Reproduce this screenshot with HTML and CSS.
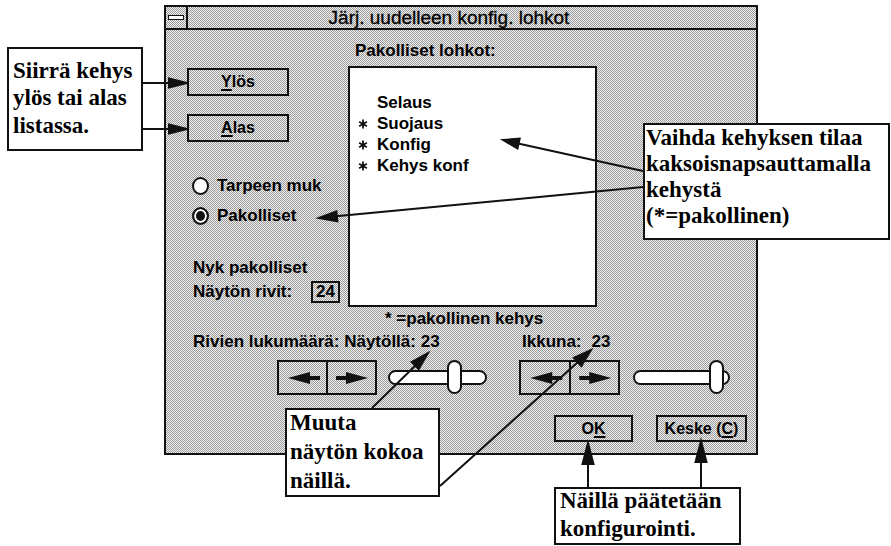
FILE: index.html
```html
<!DOCTYPE html>
<html lang="fi">
<head>
    <meta charset="UTF-8">
    <title>Järj. uudelleen konfig. lohkot</title>
    <link rel="stylesheet" href="styles.css">
</head>
<body>
<div id="figure">
    <div class="window">
        <div class="titlebar">
            <div class="sysmenu"><span class="sysbar"></span></div>
            <div class="title">Järj. uudelleen konfig. lohkot</div>
        </div>
        <div class="top">
            <div class="leftcol">
                <div class="btn btn-move"><u>Y</u>lös</div>
                <div class="btn btn-move btn-down"><u>A</u>las</div>
                <div class="radios">
                    <div class="radio"><span class="dot"></span>Tarpeen muk</div>
                    <div class="radio"><span class="dot on"></span>Pakolliset</div>
                </div>
                <div class="current">
                    <div>Nyk pakolliset</div>
                    <div class="rows"><span class="rows-label">Näytön rivit:</span><span class="rows-value">24</span></div>
                </div>
            </div>
            <div class="rightcol">
                <div class="heading">Pakolliset lohkot:</div>
                <div class="list">
                    <div class="item"><span class="mark"></span>Selaus</div>
                    <div class="item"><span class="mark"><svg class="star" viewBox="0 0 10 10"><path d="M5 0.5V9.5M1.1 2.75L8.9 7.25M1.1 7.25L8.9 2.75"/></svg></span>Suojaus</div>
                    <div class="item"><span class="mark"><svg class="star" viewBox="0 0 10 10"><path d="M5 0.5V9.5M1.1 2.75L8.9 7.25M1.1 7.25L8.9 2.75"/></svg></span>Konfig</div>
                    <div class="item"><span class="mark"><svg class="star" viewBox="0 0 10 10"><path d="M5 0.5V9.5M1.1 2.75L8.9 7.25M1.1 7.25L8.9 2.75"/></svg></span>Kehys konf</div>
                </div>
                <div class="note">* =pakollinen kehys</div>
            </div>
        </div>
        <div class="counts">
            <div class="count-screen">Rivien lukumäärä: Näytöllä: 23</div>
            <div>Ikkuna:<span class="count-val">23</span></div>
        </div>
        <div class="controls">
            <div class="spin">
                <div class="spin-half"><svg viewBox="0 0 47 31"><polygon points="9,16 31,10 31,22"/><rect x="30" y="14" width="11" height="4"/></svg></div>
                <div class="spin-half"><svg viewBox="0 0 47 31"><rect x="8" y="14" width="11" height="4"/><polygon points="40,16 18,10 18,22"/></svg></div>
            </div>
            <div class="slider">
                <div class="track"></div>
                <div class="thumb" style="left: 59px"></div>
            </div>
            <div class="spin spin-window">
                <div class="spin-half"><svg viewBox="0 0 47 31"><polygon points="9,16 31,10 31,22"/><rect x="30" y="14" width="11" height="4"/></svg></div>
                <div class="spin-half"><svg viewBox="0 0 47 31"><rect x="8" y="14" width="11" height="4"/><polygon points="40,16 18,10 18,22"/></svg></div>
            </div>
            <div class="slider slider-window">
                <div class="track"></div>
                <div class="thumb" style="left: 76px"></div>
            </div>
        </div>
        <div class="actions">
            <div class="btn btn-ok">O<u>K</u></div>
            <div class="btn btn-cancel">Keske (<u>C</u>)</div>
        </div>
    </div>

    <!-- leader lines from the notes to the controls -->
    <svg class="leaders" viewBox="0 0 891 546">
        <line x1="143" y1="83" x2="172" y2="83"/>
        <polygon points="187,83 169,78.5 169,87.5"/>
        <line x1="143" y1="129" x2="172" y2="129"/>
        <polygon points="187,129 169,124.5 169,133.5"/>
        <line x1="643" y1="171" x2="517" y2="143.2"/>
        <polygon points="503,140 517.5,148.4 519.7,138.6"/>
        <line x1="643" y1="187" x2="336" y2="216.3"/>
        <polygon points="319,218 337.4,221.3 336.4,211.3"/>
        <line x1="372" y1="408" x2="416" y2="365"/>
        <polygon points="428,353 418.7,369.2 411.7,362"/>
        <line x1="440" y1="486" x2="578" y2="362"/>
        <polygon points="591,350 581.3,366.1 573.9,357.9"/>
        <line x1="588" y1="487" x2="588" y2="462"/>
        <polygon points="588,443 582.5,464 593.5,464"/>
        <line x1="701" y1="487" x2="701" y2="461"/>
        <polygon points="701,441 695.5,462 706.5,462"/>
    </svg>

    <div class="callout callout-move"><p>Siirrä kehys<br>ylös tai alas<br>listassa.</p></div>
    <div class="callout callout-state"><p>Vaihda kehyksen tilaa<br>kaksoisnapsauttamalla<br>kehystä<br>(*=pakollinen)</p></div>
    <div class="callout callout-size"><p>Muuta<br>näytön kokoa<br>näillä.</p></div>
    <div class="callout callout-done"><p>Näillä päätetään<br>konfigurointi.</p></div>
</div>
</body>
</html>
```

FILE: styles.css
```css
body {
    margin: 0;
    background: #fff;
    color: #000;
    font-family: "Liberation Sans", Arial, sans-serif;
    font-weight: bold;
    font-size: 17px;
}

#figure {
    position: relative;
    width: 891px;
    height: 546px;
    overflow: hidden;
    background: #fff;
}

/* dialog window */
.window {
    position: absolute;
    left: 164px;
    top: 5px;
    width: 594px;
    height: 450px;
    box-sizing: border-box;
    border: 2px solid #111;
    background: repeating-conic-gradient(#9c9c9c 0% 25%, #efefef 0% 50%) 0 0 / 2px 2px;
    display: flex;
    flex-direction: column;
}

.titlebar {
    height: 23px;
    box-sizing: border-box;
    border-bottom: 2px solid #111;
    display: flex;
}

.sysmenu {
    width: 22px;
    box-sizing: border-box;
    border-right: 2px solid #111;
    display: flex;
    align-items: center;
    justify-content: center;
}

.sysbar {
    width: 16px;
    height: 5px;
    box-sizing: border-box;
    border: 1px solid #111;
    background: #fff;
}

.title {
    flex: 1;
    text-align: center;
    font-weight: normal;
    font-size: 19px;
    line-height: 21px;
    padding-right: 46px;
    -webkit-text-stroke: 0.3px #000;
}

.top {
    display: flex;
    height: 300px;
}

.leftcol {
    width: 182px;
    box-sizing: border-box;
    padding: 38px 0 0 21px;
}

.btn {
    box-sizing: border-box;
    border: 2px solid #111;
    display: flex;
    align-items: center;
    justify-content: center;
    font-size: 16px;
}

.btn u {
    text-decoration-thickness: 2px;
    text-underline-offset: 2px;
}

.btn-move {
    width: 102px;
    height: 28px;
}

.btn-down {
    margin-top: 18px;
}

.radios {
    margin-top: 34px;
    padding-left: 5px;
    display: flex;
    flex-direction: column;
    gap: 10px;
}

.radio {
    display: flex;
    align-items: center;
    height: 20px;
    line-height: 20px;
}

.dot {
    width: 17px;
    height: 18px;
    box-sizing: border-box;
    border: 2px solid #111;
    border-radius: 50%;
    background: #fff;
    margin-right: 8px;
}

.dot.on {
    background: #111;
    box-shadow: inset 0 0 0 2px #fff;
}

.current {
    margin-top: 30px;
    padding-left: 6px;
    line-height: 24px;
}

.rows {
    display: flex;
    align-items: center;
}

.rows-label {
    width: 118px;
}

.rows-value {
    width: 29px;
    height: 22px;
    box-sizing: border-box;
    border: 2px solid #111;
    line-height: 18px;
    text-align: center;
}

.rightcol {
    width: 249px;
}

.heading {
    height: 36px;
    box-sizing: border-box;
    padding: 11px 0 0 7px;
    line-height: 20px;
}

.list {
    height: 241px;
    box-sizing: border-box;
    border: 2px solid #111;
    background: #fff;
    padding: 24px 0 0 8px;
}

.item {
    display: flex;
    align-items: baseline;
    line-height: 21px;
}

.mark {
    width: 19px;
    flex: none;
}

.star {
    width: 10px;
    height: 10px;
    fill: none;
    stroke: #111;
    stroke-width: 1.8;
}

.note {
    margin-top: 2px;
    padding-left: 37px;
    line-height: 20px;
}

.counts {
    display: flex;
    margin-top: 2px;
    padding-left: 27px;
    line-height: 20px;
}

.count-screen {
    width: 329px;
}

.count-val {
    margin-left: 10px;
}

.controls {
    display: flex;
    align-items: center;
    height: 36px;
    margin-top: 7px;
    padding-left: 111px;
}

.spin {
    width: 100px;
    height: 35px;
    box-sizing: border-box;
    border: 2px solid #111;
    display: flex;
    flex: none;
}

.spin-half {
    flex: 1;
}

.spin-half + .spin-half {
    border-left: 2px solid #111;
}

.spin-half svg {
    display: block;
    width: 100%;
    height: 100%;
    fill: #111;
}

.spin-window {
    width: 101px;
    margin-left: 32px;
}

.slider {
    position: relative;
    width: 99px;
    height: 34px;
    margin-left: 11px;
    flex: none;
}

.slider-window {
    width: 97px;
    margin-left: 13px;
}

.track {
    position: absolute;
    left: 0;
    right: 0;
    top: 10px;
    height: 15px;
    box-sizing: border-box;
    border: 2px solid #111;
    border-radius: 8px;
    background: #fff;
}

.thumb {
    position: absolute;
    top: 0;
    width: 15px;
    height: 34px;
    box-sizing: border-box;
    border: 2px solid #111;
    border-radius: 8px;
    background: #fff;
}

.actions {
    display: flex;
    margin-top: 20px;
    padding-left: 388px;
}

.btn-ok {
    width: 79px;
    height: 27px;
}

.btn-cancel {
    width: 91px;
    height: 27px;
    margin-left: 23px;
}

/* annotation layer */
.leaders {
    position: absolute;
    left: 0;
    top: 0;
    width: 891px;
    height: 546px;
    pointer-events: none;
    stroke: #111;
    stroke-width: 2;
    fill: #111;
}

.callout {
    position: absolute;
    box-sizing: border-box;
    border: 2px solid #111;
    background: #fff;
    font-family: "Liberation Serif", "Times New Roman", serif;
    font-weight: bold;
    font-size: 23px;
}

.callout p {
    margin: 0;
}

.callout-move {
    left: 7px;
    top: 47px;
    width: 136px;
    height: 104px;
    padding: 7.5px 0 0 4px;
    line-height: 27.5px;
}

.callout-state {
    left: 643px;
    top: 123px;
    width: 247px;
    height: 117px;
    padding-left: 1px;
    line-height: 26px;
}

.callout-size {
    left: 285px;
    top: 408px;
    width: 155px;
    height: 89px;
    padding-left: 3px;
    line-height: 29px;
}

.callout-size p {
    margin-top: -2px;
}

.callout-done {
    left: 554px;
    top: 487px;
    width: 187px;
    height: 58px;
    padding-left: 4px;
    line-height: 28px;
}

.callout-done p {
    margin-top: -2px;
}
```
